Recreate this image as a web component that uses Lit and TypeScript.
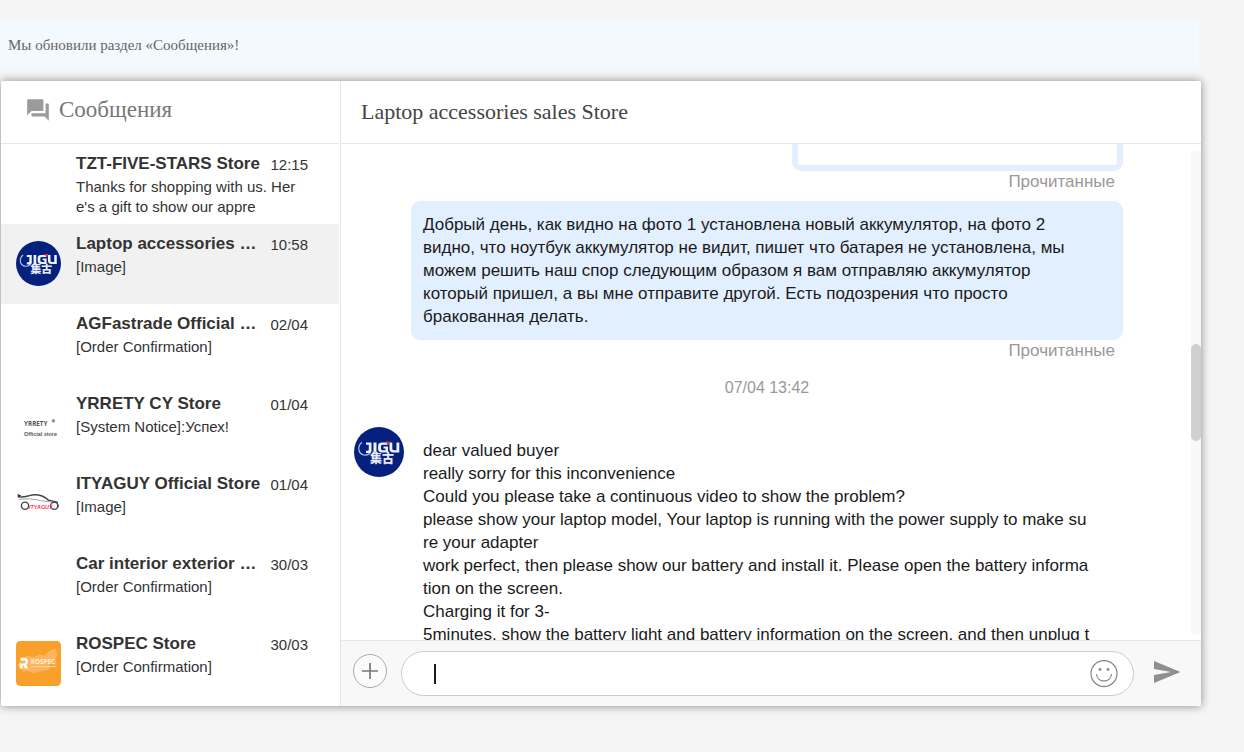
import { LitElement, html, css, svg, nothing } from "lit";
import { customElement, property, query } from "lit/decorators.js";
import { classMap } from "lit/directives/class-map.js";

type Logo = "jigu" | "yrrety" | "ityaguy" | "rospec";

interface Conversation {
  name: string;
  time: string;
  preview: string;
  logo?: Logo;
  active?: boolean;
}

const conversations: Conversation[] = [
  { name: "TZT-FIVE-STARS Store", time: "12:15", preview: "Thanks for shopping with us. Here's a gift to show our appre" },
  { name: "Laptop accessories …", time: "10:58", preview: "[Image]", logo: "jigu", active: true },
  { name: "AGFastrade Official …", time: "02/04", preview: "[Order Confirmation]" },
  { name: "YRRETY CY Store", time: "01/04", preview: "[System Notice]:Успех!", logo: "yrrety" },
  { name: "ITYAGUY Official Store", time: "01/04", preview: "[Image]", logo: "ityaguy" },
  { name: "Car interior exterior …", time: "30/03", preview: "[Order Confirmation]" },
  { name: "ROSPEC Store", time: "30/03", preview: "[Order Confirmation]", logo: "rospec" },
];

const reply = [
  "dear valued buyer",
  "really sorry for this inconvenience",
  "Could you please take a continuous video to show the problem?",
  "please show your laptop model, Your laptop is running with the power supply to make sure your adapter",
  "work perfect, then please show our battery and install it. Please open the battery information on the screen.",
  "Charging it for 3-",
  "5minutes, show the battery light and battery information on the screen, and then unplug t",
];

const logos = {
  jigu: svg`
    <circle cx="25" cy="25" r="25" fill="#05207d"/>
    <path d="M8 15.500C3 19 4 27 10 28c4 .5 7-1.500 7-5" fill="none" stroke="#b9c6ec" stroke-width="1.200"/>
    <path d="M12 15.500h5.500v7.500c0 2.500-1.500 3.500-5.500 3v-2.300c2 .2 2.800 0 2.800-1.200v-4.700H12z M19.500 15.500h3v10h-3z M34 15.500v2.300h-5c-1.500 0-2 .7-2 1.700v2c0 1.200.6 1.800 2 1.800h2.500v-1.800h-2v-2H34v6h-6c-2.700 0-3.900-1.200-3.900-3.500v-3c0-2.300 1.200-3.500 3.900-3.500z M35.500 15.500h2.800v6c0 1.200.5 1.700 1.700 1.700h2.500v-7.700h2.800v10h-6c-2.600 0-3.800-1.200-3.800-3.500z" fill="#eef2fd"/>
    <path d="M31.500 14.500h4.500l-2 4z" fill="#e03a46"/>
    <text x="28" y="36" text-anchor="middle" class="cjk" fill="#e5ebfa">集古</text>`,
  yrrety: svg`
    <text x="9" y="28" class="brand" fill="#555">YRRETY</text>
    <circle cx="41.500" cy="22" r="1.500" fill="#999" stroke="#777" stroke-width=".7"/>
    <text x="9" y="39" class="brand-small" fill="#555">Official store</text>`,
  ityaguy: svg`
    <path d="M2 17c4 2 8 .5 13-.8 7-1.800 14-1 21 5l9.500 2.200 1.200 4.500-2 2" fill="none" stroke="#444" stroke-width="1.600"/>
    <path d="M1.500 14.500l4.500 1.500-3.500 2.500z" fill="#333"/>
    <path d="M3 20.500c8-1 16-1 25 1.500l14 1.500" fill="none" stroke="#999" stroke-width="1"/>
    <circle cx="10" cy="27.500" r="4" fill="#fff" stroke="#444" stroke-width="1.600"/>
    <circle cx="42.500" cy="27.500" r="4" fill="#fff" stroke="#444" stroke-width="1.600"/>
    <text x="14.500" y="31.500" class="brand-red" fill="#ee3b4c">ITYAGUY</text>`,
  rospec: svg`
    <rect width="50" height="50" rx="5" fill="#fb9f2b"/>
    <path d="M2 27l4-7 6-4 7 2 7-3 6 1 5-5 7-3 2 7-2 5 1 5-3 3-1-5-3 2-1 6-5 2-7 1-5 2-7-3-5 1z" fill="#fdb65d"/>
    <path fill-rule="evenodd" d="M5 18.500h4c3 0 4.200 1.500 4.200 4.300 0 1.700-.7 3-1.800 3.600l2 4.100H10l-1.600-3.500H7.500v3.500H4v-5.500h5c1.200 0 1.800-.7 1.800-1.700s-.6-1.600-1.800-1.600H5z" fill="#fff"/>
    <text x="16.500" y="25.500" class="rospec" fill="#fff0d8">ROSPEC</text>
    <path d="M17 28.500h28" stroke="#ffdca8" stroke-width="1"/>`,
};

@customElement("store-logo")
class StoreLogo extends LitElement {
  @property() logo?: Logo;

  static styles = css`
    :host { display: block; }
    .art { display: block; width: 100%; aspect-ratio: 1; }
    .cjk { font: 900 12px "Noto Sans CJK SC", sans-serif; }
    .brand { font: bold 7px "Open Sans", sans-serif; }
    .brand-small { font: bold 6px "Liberation Sans", sans-serif; }
    .brand-red { font: italic bold 6px "Liberation Sans", sans-serif; }
    .rospec { font: bold 7px "Open Sans", sans-serif; }
  `;

  render() {
    return this.logo
      ? html`<svg class="art" viewBox="0 0 50 50" aria-hidden="true">${logos[this.logo]}</svg>`
      : nothing;
  }
}

@customElement("conversation-list")
class ConversationList extends LitElement {
  static styles = css`
    :host { display: flex; flex-direction: column; border-right: 1px solid #e6e6e6; overflow: hidden; }
    .head { display: flex; align-items: center; gap: 8px; height: 62px; padding: 0 24px 4px; box-sizing: border-box; flex: none; color: #777; }
    .head-icon { width: 26px; height: 26px; fill: #9b9b9b; }
    .title { margin: 0; font: 400 23px/28px "Liberation Serif", serif; }
    .list { list-style: none; margin: 0 1px 0 0; padding: 0; border-top: 1px solid #e6e6e6; overflow: hidden; }
    .row { display: grid; grid-template-columns: 45px 1fr; gap: 15px; width: 100%; height: 80px; padding: 8px 31px 0 15px; border: 0; background: none; box-sizing: border-box; text-align: left; font-family: "Liberation Sans", Arial, sans-serif; color: #333; }
    .active { background: #f1f1f1; }
    .logo { margin-top: 9px; }
    .text { min-width: 0; }
    .line { display: flex; justify-content: space-between; white-space: nowrap; }
    .name { font-size: 17px; line-height: 23px; font-weight: 700; }
    .time { font-size: 15px; line-height: 26px; }
    .preview { display: block; width: 222px; font-size: 15px; line-height: 20px; margin-top: -1px; word-break: break-all; }
  `;

  render() {
    return html`
      <header class="head">
        <svg class="head-icon" viewBox="0 0 24 24" aria-hidden="true">
          <path d="M21 6h-2v9H6v2c0 .55.45 1 1 1h11l4 4V7c0-.55-.45-1-1-1zm-4 6V3c0-.55-.45-1-1-1H3c-.55 0-1 .45-1 1v14l4-4h10c.55 0 1-.45 1-1z"/>
        </svg>
        <h1 class="title">Сообщения</h1>
      </header>
      <ul class="list">
        ${conversations.map((c) => html`
          <li>
            <button class=${classMap({ row: true, active: !!c.active })}>
              <store-logo class="logo" .logo=${c.logo}></store-logo>
              <span class="text">
                <span class="line"><span class="name">${c.name}</span><span class="time">${c.time}</span></span>
                <span class="preview">${c.preview}</span>
              </span>
            </button>
          </li>`)}
      </ul>`;
  }
}

@customElement("chat-thread")
class ChatThread extends LitElement {
  @query(".messages") messages!: HTMLElement;

  static styles = css`
    :host { display: flex; flex-direction: column; min-width: 0; min-height: 0; font-family: "Liberation Sans", Arial, sans-serif; color: #1a1a1a; }
    .head { display: flex; align-items: center; height: 63px; padding: 0 20px; box-sizing: border-box; flex: none; border-bottom: 1px solid #e6e6e6; }
    .title { margin: 0; font: 400 22px/28px "Liberation Serif", serif; color: #444; }
    .body { display: flex; flex: 1; min-height: 0; }
    .messages { flex: 1; min-width: 0; overflow-y: auto; scrollbar-width: none; font-size: 17px; line-height: 23px; padding: 16px 68px 0 13px; }
    .messages::-webkit-scrollbar { display: none; }
    .rail { flex: none; width: 10px; margin: 6px 0 5px; display: grid; grid-template-rows: 2fr 1fr 2fr; background: #f8f8f8; border-radius: 5px; }
    .thumb { grid-row: 2; background: #d0d0d0; border-radius: 5px; }
    .own { display: flex; flex-direction: column; align-items: flex-end; margin-left: 57px; }
    .photo { width: 319px; height: 180px; border: 6px solid #e2efff; border-radius: 9px; background: #fff; }
    .bubble { box-sizing: border-box; width: 100%; margin: 0; padding: 12px 33px 12px 12px; background: #e2efff; border-radius: 9px; min-height: 139px; }
    .status { color: #999; line-height: 22px; padding: 0 8px; margin-bottom: 8px; }
    .date { margin: 6px 0 27px 57px; text-align: center; font-size: 16px; line-height: 24px; color: #999; }
    .incoming { display: grid; grid-template-columns: 50px 1fr; gap: 19px; padding-right: 33px; }
    .reply { padding-top: 12px; word-break: break-all; }
    .paragraph { margin: 0; }
    .composer { display: flex; align-items: center; flex: none; height: 66px; box-sizing: border-box; padding: 0 19px 0 12px; border-top: 1px solid #e6e6e6; background: #f8f8f8; }
    .icon-button { display: block; padding: 0; border: 0; background: none; flex: none; }
    .icon { display: block; }
    .add { margin: 0 14px 6px 0; }
    .field { display: flex; align-items: center; flex: 1; min-width: 0; height: 45px; box-sizing: border-box; padding: 0 15px 0 32px; border: 1px solid #ccc; border-radius: 23px; background: #fff; }
    .caret { flex: none; width: 2px; height: 20px; background: #1a1a1a; }
    .input { flex: 1; min-width: 0; border: 0; outline: 0; background: none; font: 17px/23px "Liberation Sans", Arial, sans-serif; }
    .send { margin: 0 0 4px 18px; }
  `;

  firstUpdated() {
    this.messages.scrollTop = 181;
  }

  render() {
    return html`
      <header class="head"><h2 class="title">Laptop accessories sales Store</h2></header>
      <div class="body">
        <div class="messages">
          <div class="own">
            <div class="photo"></div>
            <span class="status">Прочитанные</span>
          </div>
          <div class="own">
            <p class="bubble">Добрый день, как видно на фото 1 установлена новый аккумулятор, на фото 2 видно, что ноутбук аккумулятор не видит, пишет что батарея не установлена, мы можем решить наш спор следующим образом я вам отправляю аккумулятор который пришел, а вы мне отправите другой. Есть подозрения что просто бракованная делать.</p>
            <span class="status">Прочитанные</span>
          </div>
          <div class="date">07/04 13:42</div>
          <div class="incoming">
            <store-logo .logo=${"jigu"}></store-logo>
            <div class="reply">${reply.map((p) => html`<p class="paragraph">${p}</p>`)}</div>
          </div>
        </div>
        <div class="rail"><div class="thumb"></div></div>
      </div>
      <form class="composer" @submit=${(e: Event) => e.preventDefault()}>
        <button class="icon-button add" type="button" aria-label="+">
          <svg class="icon" width="34" height="34" viewBox="0 0 34 34" fill="none">
            <circle cx="17" cy="17" r="16.500" fill="#fbfbfb" stroke="#aaa"/>
            <path d="M17 9v16M9 17h16" stroke="#777" stroke-width="1.700"/>
          </svg>
        </button>
        <div class="field">
          <span class="caret"></span>
          <input class="input" type="text" aria-label="Сообщения">
          <button class="icon-button" type="button" aria-label="☺">
            <svg class="icon" width="28" height="28" viewBox="0 0 28 28" fill="none" stroke="#8c8c8c">
              <circle cx="14" cy="13.500" r="13" stroke-width="1.300"/>
              <path d="M6.500 14c.8 9.200 14.200 9.200 15 0" stroke-width="1.300"/>
              <circle cx="10" cy="9.500" r="1.400" fill="#8c8c8c" stroke="none"/>
              <circle cx="18" cy="9.500" r="1.400" fill="#8c8c8c" stroke="none"/>
            </svg>
          </button>
        </div>
        <button class="icon-button send" type="submit" aria-label="➤">
          <svg class="icon" width="30" height="26" viewBox="0 0 30 26" fill="#8f8f8f">
            <path d="M2 2l26.500 11L2 24v-8l17-3L2 10z"/>
          </svg>
        </button>
      </form>`;
  }
}

@customElement("app-root")
class AppRoot extends LitElement {
  static styles = css`
    :host { display: flex; flex-direction: column; height: 100vh; box-sizing: border-box; padding: 20px 43px 46px 0; background: #f5f5f5; }
    .notice { flex: none; margin: 0 2px 12px 0; padding: 15px 8px 14px; background: #f2f9ff; color: #666; font: 15px/20px "Liberation Serif", serif; }
    .panel { display: grid; grid-template-columns: 340px 1fr; grid-template-rows: minmax(0, 1fr); flex: 1; min-height: 0; margin-left: 1px; overflow: hidden; background: #fff; border-radius: 2px; box-shadow: 0 0 10px rgba(0, 0, 0, 0.45); }
  `;

  render() {
    return html`
      <p class="notice">Мы обновили раздел «Сообщения»!</p>
      <main class="panel">
        <conversation-list></conversation-list>
        <chat-thread></chat-thread>
      </main>`;
  }
}
